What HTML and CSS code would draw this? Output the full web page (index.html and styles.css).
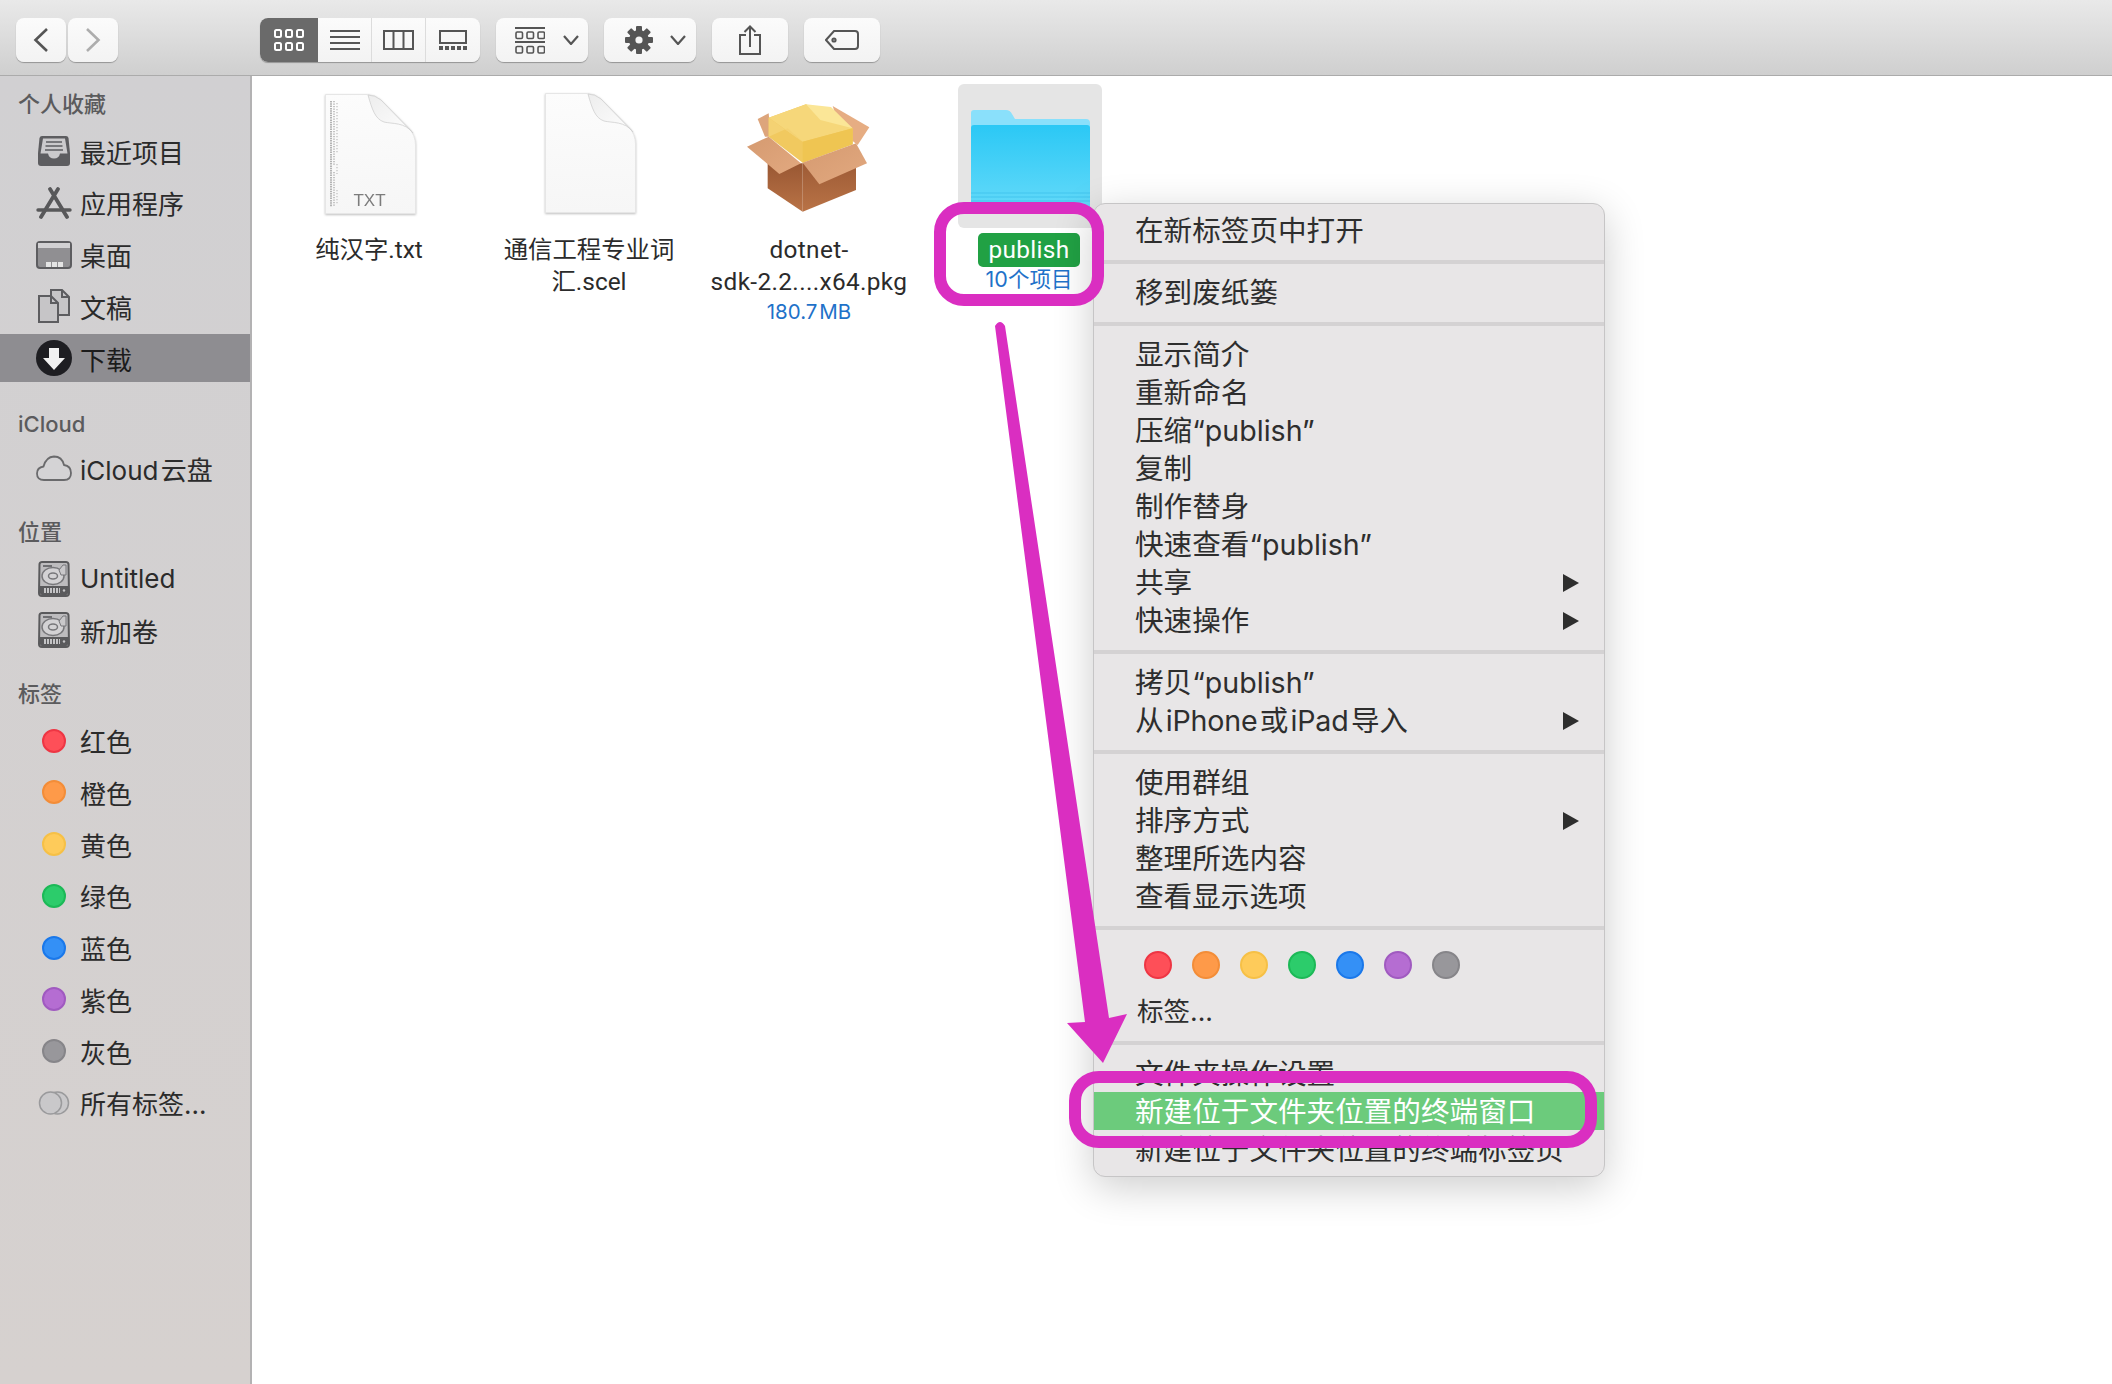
FILE: index.html
```html
<!DOCTYPE html>
<html lang="zh-CN">
  <head>
    <meta charset="UTF-8" />
    <meta name="viewport" content="width=device-width, initial-scale=1.0" />
    <title>Finder</title>
    <link rel="stylesheet" href="styles.css">
  </head>
  <body>
    <svg class="defs" width="0" height="0">
      <symbol id="hdd" viewBox="0 0 32 36">
        <path d="M4 1H28Q30 1 30.5 3L31 32Q31 35 28 35H4Q1 35 1 32L1.5 3Q2 1 4 1Z" fill="#bdbcbe" stroke="#5a5a5c" stroke-width="2" />
        <rect x="5" y="4" width="9" height="2" fill="#6f6f72" />
        <ellipse cx="15" cy="15" rx="11" ry="8.5" fill="#d3d2d4" stroke="#77777a" stroke-width="1.5" />
        <ellipse cx="15" cy="15" rx="4.5" ry="3" fill="none" stroke="#77777a" stroke-width="1.5" />
        <path d="M21 9 L25 4 H28 V14 L23 14 Z" fill="#c9c8ca" stroke="#77777a" stroke-width="1" />
        <path d="M2 25 H30 V32 Q30 34 28 34 H4 Q2 34 2 32 Z" fill="#5a5a5c" />
        <path d="M6 29.5 H22" stroke="#c4c4c6" stroke-width="5" stroke-dasharray="2 1" />
        <circle cx="26" cy="29.5" r="1.2" fill="#c4c4c6" />
      </symbol>
      <linearGradient id="page" x1="0" y1="0" x2="0" y2="1">
        <stop offset="0" stop-color="#fcfcfc" />
        <stop offset="1" stop-color="#f6f6f6" />
      </linearGradient>
      <linearGradient id="fold" x1="0" y1="0" x2="1" y2="1">
        <stop offset="0" stop-color="#ededed" />
        <stop offset="1" stop-color="#fefefe" />
      </linearGradient>
      <linearGradient id="box-flap" x1="0" y1="0" x2="1" y2="1">
        <stop offset="0" stop-color="#d59a70" />
        <stop offset="1" stop-color="#e2a980" />
      </linearGradient>
      <linearGradient id="box-side" x1="0" y1="0" x2="0" y2="1">
        <stop offset="0" stop-color="#995733" />
        <stop offset="1" stop-color="#b97346" />
      </linearGradient>
    </svg>

    <header class="toolbar">
      <div class="nav-pair">
        <button class="btn btn-nav">
          <svg width="16" height="26" viewBox="0 0 16 26"><path d="M14 2 L2.5 13 L14 24" fill="none" stroke="#555" stroke-width="2.6" /></svg>
        </button>
        <button class="btn btn-nav">
          <svg width="16" height="26" viewBox="0 0 16 26"><path d="M2 2 L13.5 13 L2 24" fill="none" stroke="#adadad" stroke-width="2.6" /></svg>
        </button>
      </div>

      <div class="view-group">
        <div class="view-cell view-active">
          <svg width="30" height="22" viewBox="0 0 30 22" fill="none" stroke="#fff" stroke-width="2">
            <rect x="1" y="1" width="6" height="7" rx="1.5" /><rect x="12" y="1" width="6" height="7" rx="1.5" /><rect x="23" y="1" width="6" height="7" rx="1.5" />
            <rect x="1" y="14" width="6" height="7" rx="1.5" /><rect x="12" y="14" width="6" height="7" rx="1.5" /><rect x="23" y="14" width="6" height="7" rx="1.5" />
          </svg>
        </div>
        <div class="view-cell view-list">
          <svg width="30" height="20" viewBox="0 0 30 20" stroke="#555" stroke-width="2"><path d="M0 1H30M0 7H30M0 13H30M0 19H30" /></svg>
        </div>
        <div class="view-cell view-cols">
          <svg width="31" height="20" viewBox="0 0 31 20" fill="none" stroke="#555" stroke-width="2"><rect x="1" y="1" width="29" height="18" /><path d="M10.5 1V19M20.5 1V19" /></svg>
        </div>
        <div class="view-cell view-gallery">
          <svg width="28" height="20" viewBox="0 0 28 20"><rect x="1" y="1" width="26" height="12" fill="none" stroke="#555" stroke-width="2" /><path d="M0 18H28" stroke="#555" stroke-width="4" stroke-dasharray="4 2" /></svg>
        </div>
      </div>

      <button class="btn btn-groupby">
        <svg width="30" height="27" viewBox="0 0 30 27" fill="none" stroke="#555" stroke-width="1.6">
          <path d="M0 1H30M0 15H30" stroke-width="2" />
          <rect x="1" y="5" width="6.5" height="6.5" rx="1.2" /><rect x="12" y="5" width="6.5" height="6.5" rx="1.2" /><rect x="23" y="5" width="6.5" height="6.5" rx="1.2" />
          <rect x="1" y="19.5" width="6.5" height="6.5" rx="1.2" /><rect x="12" y="19.5" width="6.5" height="6.5" rx="1.2" /><rect x="23" y="19.5" width="6.5" height="6.5" rx="1.2" />
        </svg>
        <svg width="16" height="10" viewBox="0 0 16 10"><path d="M1 1 L8 9 L15 1" fill="none" stroke="#555" stroke-width="2.2" /></svg>
      </button>

      <button class="btn btn-gear">
        <svg width="28" height="28" viewBox="0 0 28 28">
          <g fill="#555">
            <rect x="11" y="0" width="6" height="28" rx="1" />
            <rect x="11" y="0" width="6" height="28" rx="1" transform="rotate(45 14 14)" />
            <rect x="11" y="0" width="6" height="28" rx="1" transform="rotate(90 14 14)" />
            <rect x="11" y="0" width="6" height="28" rx="1" transform="rotate(135 14 14)" />
            <circle cx="14" cy="14" r="10" />
          </g>
          <circle cx="14" cy="14" r="3.6" fill="#f4f4f4" />
        </svg>
        <svg width="16" height="10" viewBox="0 0 16 10"><path d="M1 1 L8 9 L15 1" fill="none" stroke="#555" stroke-width="2.2" /></svg>
      </button>

      <button class="btn btn-plain">
        <svg width="22" height="30" viewBox="0 0 22 30" fill="none" stroke="#555" stroke-width="2">
          <path d="M7 10H1V29H21V10H15" /><path d="M11 22V1.5M5.5 7 L11 1.5 L16.5 7" />
        </svg>
      </button>

      <button class="btn btn-plain btn-tag">
        <svg width="34" height="20" viewBox="0 0 34 20" fill="none" stroke="#555" stroke-width="2">
          <path d="M9 1H30Q33 1 33 4V16Q33 19 30 19H9L1 10Z" /><circle cx="9" cy="10" r="1.6" />
        </svg>
      </button>
    </header>

    <div class="window">
      <aside class="sidebar">
        <section class="side-section">
          <h3 class="side-title">个人收藏</h3>
          <div class="side-row">
            <span class="side-icon">
              <svg width="32" height="32" viewBox="0 0 32 32">
                <path d="M4 1h24q2 0 2.5 2L32 18v10q0 3-3 3H3q-3 0-3-3V18L1.5 3Q2 1 4 1z" fill="#5d5d60" />
                <path d="M5 3.5h22l2.5 15H22q-1 5-6 5t-6-5H2.5z" fill="#cbcacc" />
                <path d="M8 7H24M7.5 11H24.5M7 15H25" stroke="#5d5d60" stroke-width="1.6" />
              </svg>
            </span>
            <span>最近项目</span>
          </div>
          <div class="side-row">
            <span class="side-icon">
              <svg width="36" height="32" viewBox="0 0 36 32" fill="none" stroke="#58585a" stroke-linecap="round">
                <path d="M14 2 L31 30M22 2 L5 30" stroke-width="3.8" /><path d="M2 23H34" stroke-width="3.4" />
              </svg>
            </span>
            <span>应用程序</span>
          </div>
          <div class="side-row">
            <span class="side-icon">
              <svg width="36" height="28" viewBox="0 0 36 28">
                <rect x="1" y="1" width="34" height="26" rx="3" fill="#908f92" stroke="#5d5d60" stroke-width="2" />
                <path d="M2 2H34V7H2Z" fill="#d2d1d3" />
                <path d="M10 23.5H27" stroke="#e4e4e4" stroke-width="5" stroke-dasharray="5 1" />
              </svg>
            </span>
            <span>桌面</span>
          </div>
          <div class="side-row">
            <span class="side-icon">
              <svg width="32" height="34" viewBox="0 0 32 34" fill="#c6c5c7" stroke="#5d5d60" stroke-width="2">
                <path d="M13 1H24L31 8V26H13Z" /><path d="M24 1V8H31" fill="none" />
                <path d="M1 7H13L20 14V33H1Z" /><path d="M13 7V14H20" fill="none" />
              </svg>
            </span>
            <span>文稿</span>
          </div>
          <div class="side-row side-selected">
            <span class="side-icon">
              <svg width="36" height="36" viewBox="0 0 36 36">
                <circle cx="18" cy="18" r="18" fill="#1e1e22" />
                <path d="M13 8H23V18H29L18 30L7 18H13Z" fill="#f1f1f1" />
              </svg>
            </span>
            <span>下载</span>
          </div>
        </section>

        <section class="side-section">
          <h3 class="side-title side-title-latin">iCloud</h3>
          <div class="side-row">
            <span class="side-icon">
              <svg width="36" height="26" viewBox="0 0 36 26">
                <path d="M8 25Q1 25 1 18.5Q1 12.5 7.5 11.5Q10 2 18 1.5Q26 1.5 28 10Q35 11 35 18Q35 25 28 25Z" fill="#d4d3d5" stroke="#6a6a6c" stroke-width="1.8" />
              </svg>
            </span>
            <span>iCloud&#8202;云盘</span>
          </div>
        </section>

        <section class="side-section">
          <h3 class="side-title">位置</h3>
          <div class="side-row">
            <span class="side-icon"><svg width="32" height="36"><use href="#hdd" /></svg></span>
            <span>Untitled</span>
          </div>
          <div class="side-row">
            <span class="side-icon"><svg width="32" height="36"><use href="#hdd" /></svg></span>
            <span>新加卷</span>
          </div>
        </section>

        <section class="side-section">
          <h3 class="side-title">标签</h3>
          <div class="side-row"><span class="side-icon"><i class="dot dot-red"></i></span><span>红色</span></div>
          <div class="side-row"><span class="side-icon"><i class="dot dot-orange"></i></span><span>橙色</span></div>
          <div class="side-row"><span class="side-icon"><i class="dot dot-yellow"></i></span><span>黄色</span></div>
          <div class="side-row"><span class="side-icon"><i class="dot dot-green"></i></span><span>绿色</span></div>
          <div class="side-row"><span class="side-icon"><i class="dot dot-blue"></i></span><span>蓝色</span></div>
          <div class="side-row"><span class="side-icon"><i class="dot dot-purple"></i></span><span>紫色</span></div>
          <div class="side-row"><span class="side-icon"><i class="dot dot-gray"></i></span><span>灰色</span></div>
          <div class="side-row">
            <span class="side-icon">
              <svg width="32" height="24" viewBox="0 0 32 24">
                <circle cx="19.5" cy="12" r="11" fill="#c9c8ca" stroke="#9a9a9c" stroke-width="1.5" />
                <circle cx="12.5" cy="12" r="11" fill="#c9c8ca" stroke="#9a9a9c" stroke-width="1.5" />
              </svg>
            </span>
            <span>所有标签...</span>
          </div>
        </section>
      </aside>

      <main class="files">
        <div class="file">
          <div class="file-thumb">
            <svg class="file-icon doc-icon" width="91" height="120" viewBox="0 0 91 120">
              <path d="M0.5 0.5H42Q50 0.5 56 6L83 33Q90.5 41 90.5 51V119.5H0.5Z" fill="url(#page)" stroke="#e6e6e6" />
              <path d="M43 1C47 15 50 25 59 28C67 30 80 28 88 39L56 6Q50 1 43 1Z" fill="url(#fold)" stroke="#cfcfcf" stroke-width="0.8" />
              <path d="M6 7V113" stroke="#b4b4b4" stroke-width="2" stroke-dasharray="1.5 0.8" />
              <path d="M9 7V72M9 78V113" stroke="#c4c4c4" stroke-width="2" stroke-dasharray="1.2 1.3" />
              <path d="M12 9V60M12 70V80M12 96V111" stroke="#cdcdcd" stroke-width="1.6" stroke-dasharray="1.2 1.8" />
              <text class="txt-badge" x="44.5" y="112">TXT</text>
            </svg>
          </div>
          <div class="file-name">纯汉字.txt</div>
        </div>

        <div class="file">
          <div class="file-thumb">
            <svg class="file-icon doc-icon doc-plain" width="91" height="120" viewBox="0 0 91 120">
              <path d="M0.5 0.5H42Q50 0.5 56 6L83 33Q90.5 41 90.5 51V119.5H0.5Z" fill="url(#page)" stroke="#e6e6e6" />
              <path d="M43 1C47 15 50 25 59 28C67 30 80 28 88 39L56 6Q50 1 43 1Z" fill="url(#fold)" stroke="#cfcfcf" stroke-width="0.8" />
            </svg>
          </div>
          <div class="file-name">通信工程专业词<br />汇.scel</div>
        </div>

        <div class="file">
          <div class="file-thumb">
            <svg class="file-icon pkg-icon" width="140" height="125" viewBox="0 0 420 375">
              <path d="M50 72L83 55L90 125L72 125Z" fill="#dda57c" />
              <path d="M275 33L385 97L350 150L300 110Z" fill="#e6ad83" />
              <path d="M83 68L195 28L335 100V148L185 203L83 125Z" fill="#f1c95f" />
              <path d="M83 68L195 28L335 100L185 140Z" fill="#f6d77a" />
              <path d="M195 28L270 36L335 100L238 75Z" fill="#fbe697" />
              <path d="M83 125L140 100L185 140L83 68Z" fill="#f4d273" />
              <path d="M185 140V203L335 148V100Z" fill="#efc552" />
              <path d="M80 205L185 205L185 350L80 280Z" fill="url(#box-side)" />
              <path d="M185 205L345 180V285L185 350Z" fill="url(#box-side)" />
              <path d="M18 155L83 125L180 205L115 237Z" fill="url(#box-flap)" />
              <path d="M185 203L345 145L378 205L235 268Z" fill="url(#box-flap)" />
            </svg>
          </div>
          <div class="file-name name-wide">dotnet-<br />sdk-2.2....x64.pkg</div>
          <div class="file-meta">180.7&#8202;MB</div>
        </div>

        <div class="file file-selected">
          <div class="file-thumb">
            <svg class="file-icon folder-icon" width="119" height="100" viewBox="0 0 119 100">
              <defs>
                <linearGradient id="folder-front" x1="0" y1="0" x2="0" y2="1">
                  <stop offset="0" stop-color="#2bc8f5" />
                  <stop offset="1" stop-color="#64daf9" />
                </linearGradient>
              </defs>
              <path d="M3 0H35Q39 0 41 4L44 9H115Q119 9 119 13V24H0V3Q0 0 3 0Z" fill="#8ae0fb" />
              <path d="M3 15H116Q119 15 119 18V97Q119 100 116 100H3Q0 100 0 97V18Q0 15 3 15Z" fill="url(#folder-front)" />
              <path d="M0 83H119M0 87H119M0 91H119" stroke="#42c5ee" stroke-width="1" />
            </svg>
          </div>
          <div class="file-name name-wide"><span class="name-pill">publish</span></div>
          <div class="file-count">10个项目</div>
        </div>
      </main>
    </div>

    <nav class="menu">
      <div class="menu-item">在新标签页中打开</div>
      <hr class="menu-sep" />
      <div class="menu-item">移到废纸篓</div>
      <hr class="menu-sep" />
      <div class="menu-item">显示简介</div>
      <div class="menu-item">重新命名</div>
      <div class="menu-item">压缩“publish”</div>
      <div class="menu-item">复制</div>
      <div class="menu-item">制作替身</div>
      <div class="menu-item">快速查看“publish”</div>
      <div class="menu-item has-sub">共享</div>
      <div class="menu-item has-sub">快速操作</div>
      <hr class="menu-sep" />
      <div class="menu-item">拷贝“publish”</div>
      <div class="menu-item has-sub menu-tight">从&#8202;iPhone&#8202;或&#8202;iPad&#8202;导入</div>
      <hr class="menu-sep" />
      <div class="menu-item">使用群组</div>
      <div class="menu-item has-sub">排序方式</div>
      <div class="menu-item">整理所选内容</div>
      <div class="menu-item">查看显示选项</div>
      <hr class="menu-sep" />
      <div class="menu-tags">
        <i class="dot dot-lg dot-red"></i>
        <i class="dot dot-lg dot-orange"></i>
        <i class="dot dot-lg dot-yellow"></i>
        <i class="dot dot-lg dot-green"></i>
        <i class="dot dot-lg dot-blue"></i>
        <i class="dot dot-lg dot-purple"></i>
        <i class="dot dot-lg dot-gray"></i>
      </div>
      <div class="menu-item menu-tag-label">标签...</div>
      <hr class="menu-sep" />
      <div class="menu-item">文件夹操作设置</div>
      <div class="menu-item menu-hot">新建位于文件夹位置的终端窗口</div>
      <div class="menu-item">新建位于文件夹位置的终端标签页</div>
    </nav>

    <!-- hand-drawn annotations on top of the screenshot -->
    <svg class="marks" width="2112" height="1384" viewBox="0 0 2112 1384">
      <rect x="940" y="208" width="158" height="92" rx="24" fill="none" stroke="#da2ec1" stroke-width="12" />
      <rect x="1075" y="1077" width="516" height="65" rx="24" fill="none" stroke="#da2ec1" stroke-width="12" />
      <path d="M995 326Q1000 318 1005 326L1109 1018L1127 1014L1103 1063L1067 1023L1085 1022Z" fill="#da2ec1" />
    </svg>
  </body>
</html>
```

FILE: styles.css
```css
* {
  box-sizing: border-box;
}

body {
  margin: 0;
  width: 2112px;
  height: 1384px;
  overflow: hidden;
  position: relative;
  background: #fff;
  color: #2b2b2b;
  font-family: Inter, "Noto Sans CJK SC", sans-serif;
}

.defs {
  position: absolute;
}

/* toolbar */
.toolbar {
  height: 76px;
  padding: 18px 0 0 16px;
  display: flex;
  align-items: flex-start;
  gap: 16px;
  background: linear-gradient(#e9e9e9, #cfcfcf);
  border-bottom: 1px solid #ababab;
}

.btn {
  height: 44px;
  padding: 0;
  border: 0;
  border-radius: 8px;
  background: linear-gradient(#fbfbfb, #f3f3f3);
  box-shadow: 0 1px 1px rgba(0, 0, 0, 0.3);
  display: flex;
  align-items: center;
  justify-content: center;
}

.nav-pair {
  display: flex;
  gap: 2px;
  margin-right: 126px;
}

.btn-nav {
  width: 50px;
}

.view-group {
  width: 220px;
  height: 44px;
  display: flex;
  border-radius: 8px;
  overflow: hidden;
  background: linear-gradient(#fbfbfb, #f3f3f3);
  box-shadow: 0 1px 1px rgba(0, 0, 0, 0.3);
}

.view-cell {
  display: flex;
  align-items: center;
  justify-content: center;
  border-left: 1px solid #dcdcdc;
}

.view-active {
  width: 58px;
  border-left: 0;
  background: #6a6a6a;
}

.view-list {
  width: 53px;
  border-left: 0;
}

.view-cols {
  width: 54px;
}

.view-gallery {
  width: 55px;
}

.btn-groupby,
.btn-gear {
  width: 92px;
  justify-content: flex-start;
}

.btn-groupby {
  padding-left: 19px;
  gap: 18px;
}

.btn-gear {
  padding-left: 21px;
  gap: 17px;
}

.btn-plain {
  width: 76px;
}

/* window body */
.window {
  height: 1308px;
  display: flex;
}

.sidebar {
  width: 252px;
  flex: none;
  padding-top: 14px;
  background: linear-gradient(#d1d0d2, #d6d1cf);
  border-right: 2px solid #b3b2b3;
}

.side-section {
  padding-bottom: 21.5px;
}

.side-title {
  margin: 0 0 9px;
  padding-left: 18px;
  height: 28px;
  line-height: 28px;
  font-size: 22px;
  font-weight: 500;
  color: #5b5b5d;
}

.side-title-latin {
  margin: 3px 0 6px;
}

.side-row {
  height: 48px;
  margin-bottom: 3.75px;
  padding-left: 36px;
  display: flex;
  align-items: center;
  gap: 8px;
  font-size: 26px;
}

.side-selected {
  background: #8e8d91;
  color: #1c1c1c;
}

.side-icon {
  width: 36px;
  height: 36px;
  flex: none;
  display: flex;
  align-items: center;
  justify-content: center;
}

.dot {
  display: block;
  width: 24px;
  height: 24px;
  border-radius: 50%;
  border: 2px solid;
}

.dot-lg {
  width: 28px;
  height: 28px;
}

.dot-red { background: #fe4f58; border-color: #ee3644; }
.dot-orange { background: #fe9a49; border-color: #f38d38; }
.dot-yellow { background: #fecb5a; border-color: #f6c046; }
.dot-green { background: #2ccc6b; border-color: #1cb957; }
.dot-blue { background: #3490f6; border-color: #1a78ea; }
.dot-purple { background: #b56dd2; border-color: #a05ac0; }
.dot-gray { background: #98979b; border-color: #868589; }

/* file grid */
.files {
  flex: 1;
  padding: 8px 0 0 7px;
  display: flex;
  align-items: flex-start;
}

.file {
  width: 220px;
  display: flex;
  flex-direction: column;
  align-items: center;
}

.file-thumb {
  width: 144px;
  height: 144px;
  border-radius: 6px;
  display: flex;
  align-items: flex-end;
  justify-content: center;
}

.file-selected .file-thumb {
  margin-left: 2px;
  background: #e5e5e5;
}

.file-icon {
  display: block;
  margin-bottom: 15px;
  flex: none;
}

.doc-icon {
  margin-bottom: 14px;
  margin-left: 2px;
  filter: drop-shadow(0 1px 1px rgba(0, 0, 0, 0.25));
}

.doc-plain {
  margin-bottom: 15px;
}

.pkg-icon {
  margin-bottom: 8px;
  margin-left: 3px;
}

.folder-icon {
  margin-bottom: 18px;
}

.txt-badge {
  font-family: "Liberation Sans", sans-serif;
  font-size: 17px;
  fill: #7c7c7c;
  text-anchor: middle;
}

.file-name {
  margin-top: 6px;
  line-height: 32px;
  font-family: Roboto, "Noto Sans CJK SC", sans-serif;
  font-size: 24.4px;
  text-align: center;
  white-space: nowrap;
}

.name-wide {
  letter-spacing: 0.35px;
}

.file-meta {
  line-height: 28px;
  font-size: 20.5px;
  color: #1f72c9;
}

.name-pill {
  display: block;
  height: 34px;
  margin-top: -1px;
  padding: 0 10px;
  line-height: 34px;
  border-radius: 5px;
  background: #21a144;
  color: #fff;
}

.file-count {
  margin-top: -1px;
  line-height: 26px;
  font-size: 21.5px;
  color: #1f72c9;
}

/* context menu */
.menu {
  position: absolute;
  left: 1093px;
  top: 203px;
  width: 512px;
  height: 974px;
  padding: 7px 0;
  background: #e8e6e7;
  border: 1px solid #c6c5c6;
  border-radius: 12px;
  box-shadow: 0 10px 40px rgba(0, 0, 0, 0.2);
}

.menu-item {
  height: 38px;
  padding: 2px 25px 0 41px;
  display: flex;
  align-items: center;
  justify-content: space-between;
  font-size: 28.6px;
  line-height: 36px;
  color: #2e2e2e;
  white-space: nowrap;
}

.menu-tight {
  letter-spacing: -0.2px;
}

.has-sub::after {
  content: "";
  border-left: 16px solid #2e2e2e;
  border-top: 9.5px solid transparent;
  border-bottom: 9.5px solid transparent;
}

.menu-sep {
  height: 4px;
  margin: 11px 0 9px;
  border: 0;
  background: #d4d2d3;
}

.menu-tags {
  margin: 21px 0 13px;
  padding-left: 50px;
  display: flex;
  gap: 20px;
}

.menu-tag-label {
  padding-top: 0;
  padding-left: 43px;
  font-size: 26.5px;
}

.menu-hot {
  background: #6ccb7c;
  color: #fff;
}

.marks {
  position: absolute;
  left: 0;
  top: 0;
}
```
